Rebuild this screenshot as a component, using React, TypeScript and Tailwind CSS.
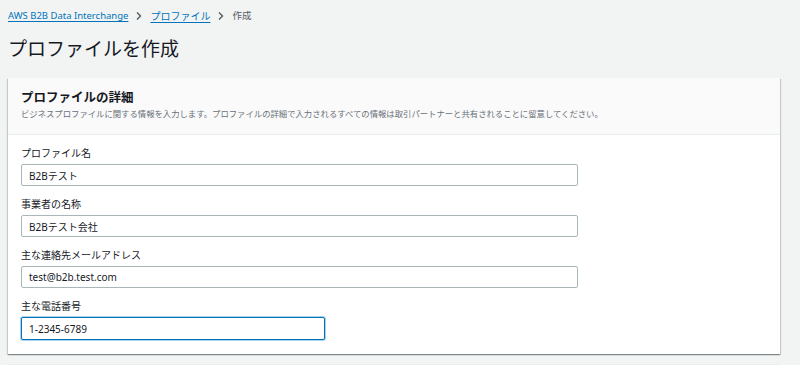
import React, { useState } from 'react';

const font = { fontFamily: '"Noto Sans", "Noto Sans CJK JP", sans-serif' };

const Chevron = () => (
  <svg width="10" height="10" viewBox="0 0 10 10" className="mx-[6px] text-[#545b64]">
    <path d="M3 1.5 L6.5 5 L3 8.5" fill="none" stroke="currentColor" strokeWidth="1.4" />
  </svg>
);

interface FieldProps {
  label: string;
  value: string;
  narrow?: boolean;
}

const Field: React.FC<FieldProps> = ({ label, value, narrow }) => {
  const [v, setV] = useState(value);
  return (
    <div>
      <label className="block text-[10px] leading-[14px] text-[#16191f] mb-[4px]">{label}</label>
      <input
        value={v}
        onChange={(e) => setV(e.target.value)}
        className={
          narrow
            ? 'block w-[304px] h-[23px] bg-white border border-[#0073bb] rounded-[2px] shadow-[0_0_0_1px_#aad1ec] px-[7px] text-[10px] text-[#16191f] outline-none'
            : 'block w-[557px] h-[22px] bg-white border border-[#aab7b8] rounded-[2px] px-[7px] text-[10px] text-[#16191f] outline-none'
        }
        style={font}
      />
    </div>
  );
};

export default function App() {
  return (
    <div className="min-h-screen bg-[#f2f3f3] px-[8px] pt-[9px]" style={font}>
      <nav className="flex items-center h-[14px] text-[9.5px]">
        <a className="text-[#0073bb] underline underline-offset-2">AWS B2B Data Interchange</a>
        <Chevron />
        <a className="text-[#0073bb] underline underline-offset-2 text-[10px]">プロファイル</a>
        <Chevron />
        <span className="text-[#545b64]">作成</span>
      </nav>

      <h1 className="mt-[13px] text-[19px] leading-[26px] text-[#16191f]">プロファイルを作成</h1>

      <div className="mt-[16px] mr-[12px] bg-white shadow-[0_1px_1px_0_rgba(0,28,36,0.3),1px_1px_1px_0_rgba(0,28,36,0.15),-1px_1px_1px_0_rgba(0,28,36,0.15)]">
        <div className="bg-[#fafafa] border-b border-[#eaeded] px-[13px] pt-[11px] pb-[14px]">
          <h2 className="text-[12.5px] leading-[18px] font-bold text-[#16191f]">プロファイルの詳細</h2>
          <p className="text-[8.35px] leading-[12px] text-[#687078] mt-[1px]">
            ビジネスプロファイルに関する情報を入力します。プロファイルの詳細で入力されるすべての情報は取引パートナーと共有されることに留意してください。
          </p>
        </div>
        <div className="px-[13px] pt-[11px] pb-[14px] flex flex-col gap-[11px]">
          <Field label="プロファイル名" value="B2Bテスト" />
          <Field label="事業者の名称" value="B2Bテスト会社" />
          <Field label="主な連絡先メールアドレス" value="test@b2b.test.com" />
          <Field label="主な電話番号" value="1-2345-6789" narrow />
        </div>
      </div>

      <div className="mt-[10px] mr-[12px] h-[20px] bg-white border-t border-[#eaeded]" />
    </div>
  );
}
